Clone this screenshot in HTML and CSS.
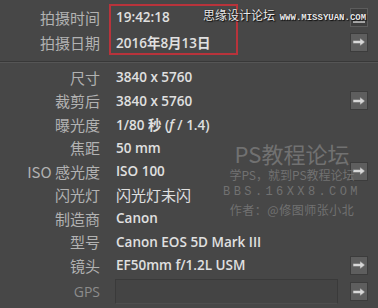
FILE: index.html
```html
<!DOCTYPE html>
<html lang="zh-CN">
<head>
  <meta charset="UTF-8" />
  <title>元数据</title>
  <link rel="stylesheet" href="styles.css">
</head>
<body>

<div class="panel">
  <!-- 拍摄时间 -->
  <section class="grupo grupo-top">
    <div class="fila alta">
      <span class="etiqueta">拍摄时间</span>
      <span class="valor">19:42:18</span>
      <span class="boton boton-oscuro"><i class="raya"></i></span>
    </div>
    <div class="fila alta">
      <span class="etiqueta">拍摄日期</span>
      <span class="valor">2016年8月13日</span>
      <span class="boton">
        <svg viewBox="0 0 14 10" width="14" height="10"><path d="M1 3.5h7V1l5 4-5 4V6.5H1z" /></svg>
      </span>
    </div>
  </section>

  <div class="separador"></div>

  <!-- datos de la camara -->
  <section class="grupo">
    <div class="fila">
      <span class="etiqueta">尺寸</span>
      <span class="valor">3840 x 5760</span>
    </div>
    <div class="fila">
      <span class="etiqueta">裁剪后</span>
      <span class="valor">3840 x 5760</span>
      <span class="boton">
        <svg viewBox="0 0 14 10" width="14" height="10"><path d="M1 3.5h7V1l5 4-5 4V6.5H1z" /></svg>
      </span>
    </div>
    <div class="fila">
      <span class="etiqueta">曝光度</span>
      <span class="valor">1/80 秒 (<i>f</i> / 1.4)</span>
    </div>
    <div class="fila">
      <span class="etiqueta">焦距</span>
      <span class="valor">50 mm</span>
    </div>
    <div class="fila">
      <span class="etiqueta">ISO 感光度</span>
      <span class="valor">ISO 100</span>
      <span class="boton">
        <svg viewBox="0 0 14 10" width="14" height="10"><path d="M1 3.5h7V1l5 4-5 4V6.5H1z" /></svg>
      </span>
    </div>
    <div class="fila">
      <span class="etiqueta">闪光灯</span>
      <span class="valor cjk">闪光灯未闪</span>
    </div>
    <div class="fila">
      <span class="etiqueta">制造商</span>
      <span class="valor">Canon</span>
    </div>
    <div class="fila">
      <span class="etiqueta">型号</span>
      <span class="valor">Canon EOS 5D Mark III</span>
    </div>
    <div class="fila">
      <span class="etiqueta">镜头</span>
      <span class="valor">EF50mm f/1.2L USM</span>
      <span class="boton">
        <svg viewBox="0 0 14 10" width="14" height="10"><path d="M1 3.5h7V1l5 4-5 4V6.5H1z" /></svg>
      </span>
    </div>
    <div class="fila fila-gps">
      <span class="etiqueta apagada">GPS</span>
      <span class="campo"></span>
      <span class="boton">
        <svg viewBox="0 0 14 10" width="14" height="10"><path d="M1 3.5h7V1l5 4-5 4V6.5H1z" /></svg>
      </span>
    </div>
  </section>
</div>

<!-- marco rojo y marcas de agua -->
<div class="marco-rojo"></div>
<div class="marca marca-arriba">思缘设计论坛 <b>WWW.MISSYUAN.COM</b></div>
<div class="marca marca-centro">
  <div class="marca-titulo">PS教程论坛</div>
  <div class="marca-linea">学PS，就到PS教程论坛</div>
  <div class="marca-url">BBS.16XX8.COM</div>
  <div class="marca-autor">作者：@修图师张小北</div>
</div>

</body>
</html>
```

FILE: styles.css
```css
* { margin: 0; padding: 0; box-sizing: border-box; }
body {
  background-color: #474747;
  overflow: hidden;
  width: 378px;
  height: 308px;
  position: relative;
  font-family: "Open Sans", "Noto Sans CJK SC", sans-serif;
}

.panel {
  display: flex;
  flex-direction: column;
}

.grupo-top {
  padding-top: 4.5px;
}

.fila {
  display: grid;
  grid-template-columns: 100px 1fr 18px;
  column-gap: 16px;
  align-items: center;
  height: 23.5px;
  padding-right: 10px;
}

.fila.alta {
  height: 25px;
}

.etiqueta {
  text-align: right;
  font-family: "Noto Sans CJK SC", sans-serif;
  font-size: 15px;
  color: #b2b2b2;
  white-space: nowrap;
}

.etiqueta.apagada {
  color: #8c8c8c;
  font-family: "Open Sans", sans-serif;
  font-size: 14px;
}

.valor {
  font-size: 13.5px;
  font-weight: 600;
  color: #e0e0e0;
  white-space: nowrap;
}

.valor.cjk {
  font-family: "Noto Sans CJK SC", sans-serif;
  font-weight: 400;
  font-size: 15px;
}

.boton {
  grid-column: 3;
  width: 18px;
  height: 19px;
  background: #5e5e5e;
  border: 1px solid #3c3c3c;
  display: flex;
  align-items: center;
  justify-content: center;
}

.boton svg path {
  fill: #d8d8d8;
  stroke: #6a6a6a;
  stroke-width: 0.6;
}

.boton-oscuro {
  background: #3e3e3e;
  border-color: #5c5c5c;
  align-items: flex-end;
  padding-bottom: 3px;
}

.raya {
  display: block;
  width: 12px;
  height: 2px;
  background: #a8a8a8;
}

.separador {
  margin-top: 6px;
  height: 2px;
  border-top: 1px solid #383838;
  border-bottom: 1px solid #555555;
  margin-bottom: 3px;
}

.fila-gps {
  height: 27px;
  margin-top: 1px;
}

.campo {
  height: 25px;
  margin-left: -1px;
  margin-right: -4px;
  background: #444444;
  border: 1px solid #3a3a3a;
  border-bottom-color: #4e4e4e;
}

/* Marco rojo */
.marco-rojo {
  position: absolute;
  left: 109px;
  top: 4px;
  width: 129px;
  height: 51px;
  border: 2px solid #b8333b;
}

/* Marcas de agua */
.marca {
  position: absolute;
  white-space: nowrap;
}

.marca-arriba {
  left: 203px;
  top: 6px;
  font-family: "Noto Sans CJK SC", sans-serif;
  font-size: 12px;
  color: #e8e8e8;
  text-shadow: 0 0 1px #111, 1px 1px 1px #111;
}

.marca-arriba b {
  font-family: "Liberation Mono", monospace;
  font-size: 9px;
  margin-left: 2px;
}

.marca-centro {
  left: 222px;
  top: 139px;
  color: #717171;
  text-align: center;
  width: 140px;
  font-family: "Noto Sans CJK SC", sans-serif;
}

.marca-titulo {
  font-size: 22px;
  line-height: 28px;
}

.marca-linea {
  font-size: 12px;
  line-height: 18px;
  margin-top: -1px;
}

.marca-url {
  font-family: "Liberation Mono", monospace;
  font-size: 12px;
  letter-spacing: 3.4px;
  line-height: 17px;
}

.marca-autor {
  font-size: 12px;
  letter-spacing: 0.5px;
  line-height: 17px;
}
```
